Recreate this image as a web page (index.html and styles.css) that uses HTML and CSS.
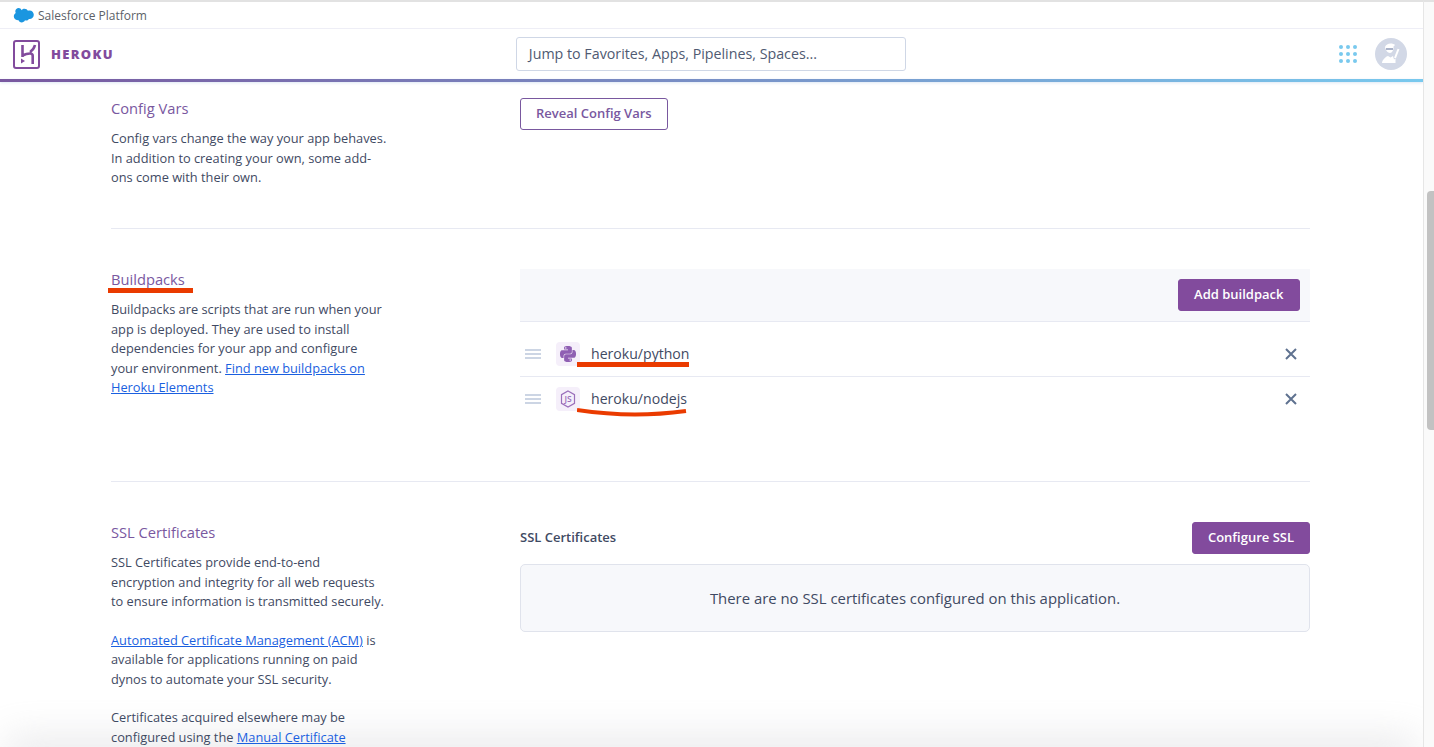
FILE: index.html
```html
<!DOCTYPE html>
<html>
<head>
  <title>Settings | Heroku</title>
  <link rel="stylesheet" href="styles.css">
</head>
<body>
<div id="page">
  <div id="window">
    <div id="sfBar">
      <svg class="cloud" width="21" height="15" viewBox="0 0 21 15">
        <path fill="#1b96e0" d="M8.7 2.2C9.4 1.3 10.4.8 11.500.8c1.500 0 2.800.8 3.400 2 .6-.2 1.100-.4 1.700-.4 2.400 0 4.200 2 4.200 4.300s-1.900 4.300-4.200 4.300h-.8c-.5 1-1.500 1.600-2.600 1.600-.4 0-.9-.1-1.200-.3-.6 1.300-1.900 2.100-3.300 2.100-1.500 0-2.800-.9-3.400-2.300-.3.1-.5.1-.8.1C2.500 12.200.8 10.500.8 8.300c0-1.400.7-2.700 1.900-3.400-.2-.5-.4-1-.4-1.600C2.300 1.500 3.900 0 5.700 0c1.200 0 2.300.8 3 2.200z"/>
      </svg>
      <span>Salesforce Platform</span>
    </div>
    <div id="nav">
      <div class="brand">
        <svg width="27" height="29" viewBox="0 0 27 29">
          <rect x="1" y="1" width="25" height="27" rx="2" fill="none" stroke="#824b9d" stroke-width="2"/>
          <path fill="none" stroke="#824b9d" stroke-width="2.600" d="M9.500 5v12M9.500 15.500c3-1.500 5-2 7.500-2 1.700 0 2.700 1 2.700 2.300V24M22 5c-.8 3-2.500 5.500-5 7"/>
          <path fill="#824b9d" d="M8 18.500l4 2.500-4 2.500z"/>
        </svg>
        <span>HEROKU</span>
      </div>
      <div class="search">Jump to Favorites, Apps, Pipelines, Spaces...</div>
      <div class="navRight">
        <svg width="18" height="18" viewBox="0 0 18 18" fill="#79c9ee">
          <circle cx="2" cy="2" r="2"/><circle cx="9" cy="2" r="2"/><circle cx="16" cy="2" r="2"/>
          <circle cx="2" cy="9" r="2"/><circle cx="9" cy="9" r="2"/><circle cx="16" cy="9" r="2"/>
          <circle cx="2" cy="16" r="2"/><circle cx="9" cy="16" r="2"/><circle cx="16" cy="16" r="2"/>
        </svg>
        <svg width="32" height="32" viewBox="0 0 32 32">
          <circle cx="16" cy="16" r="16" fill="#d2d8e6"/>
          <path fill="#fff" d="M10 9c.8-2.300 3-3.500 5.500-3.500 2 0 3.500.5 4.500 1.500l-1.500 1.500c.3 3.500-1.300 6.500-3.500 6.500s-4.500-2.800-5-6z"/>
          <path fill="#fff" d="M7 25c0-1 .5-2.500 1.500-3.500 1-1.500 2.500-3 4.500-3.500l2.500 1.500L18 18l1 3.500 1.500-1V25z"/>
          <path fill="none" stroke="#fff" stroke-width="2" d="M20 20l3.500-9"/>
          <rect x="11" y="10" width="7" height="2" fill="#aab3c9"/>
        </svg>
      </div>
    </div>
    <div id="rainbow"></div>

    <div id="content">
      <section class="row first">
        <div class="info">
          <h3>Config Vars</h3>
          <p>Config vars change the way your app behaves.<br>In addition to creating your own, some add-<br>ons come with their own.</p>
        </div>
        <div class="main">
          <a class="btn outline">Reveal Config Vars</a>
        </div>
      </section>

      <section class="row">
        <div class="info">
          <h3><span class="marked">Buildpacks<i class="mark underTitle"></i></span></h3>
          <p>Buildpacks are scripts that are run when your<br>app is deployed. They are used to install<br>dependencies for your app and configure<br>your environment. <a href="#">Find new buildpacks on<br>Heroku Elements</a></p>
        </div>
        <div class="main">
          <div class="panelHead"><a class="btn solid">Add buildpack</a></div>
          <ul class="packs">
            <li>
              <span class="grip"></span>
              <span class="langIcon">
                <svg width="16" height="16" viewBox="0 0 24 24">
                  <path fill="#8f5fb3" d="M14.25.18l.9.2.73.26.59.3.45.32.34.34.25.34.16.33.1.3.04.26.02.2-.01.13V8.5l-.05.63-.13.55-.21.46-.26.38-.3.31-.33.25-.35.19-.35.14-.33.1-.3.07-.26.04-.21.02H8.77l-.69.05-.59.14-.5.22-.41.27-.33.32-.27.35-.2.36-.15.37-.1.35-.07.32-.04.27-.02.21v3.06H3.17l-.21-.03-.28-.07-.32-.12-.35-.18-.36-.26-.36-.36-.35-.46-.32-.59-.28-.73-.21-.88-.14-1.05-.05-1.23.06-1.22.16-1.04.24-.87.32-.71.36-.57.4-.44.42-.33.42-.24.4-.16.36-.1.32-.05.24-.01h.16l.06.01h8.16v-.83H6.18l-.01-2.75-.02-.37.05-.34.11-.31.17-.28.25-.26.31-.23.38-.2.44-.18.51-.15.58-.12.64-.1.71-.06.77-.04.84-.02 1.27.05zm-6.3 1.98l-.23.33-.08.41.08.41.23.34.33.22.41.09.41-.09.33-.22.23-.34.08-.41-.08-.41-.23-.33-.33-.22-.41-.09-.41.09zm13.09 3.95l.28.06.32.12.35.18.36.27.36.35.35.47.32.59.28.73.21.88.14 1.04.05 1.23-.06 1.23-.16 1.04-.24.86-.32.71-.36.57-.4.45-.42.33-.42.24-.4.16-.36.09-.32.05-.24.02-.16-.01h-8.22v.82h5.84l.01 2.76.02.36-.05.34-.11.31-.17.29-.25.25-.31.24-.38.2-.44.17-.51.15-.58.13-.64.09-.71.07-.77.04-.84.01-1.27-.04-1.07-.14-.9-.2-.73-.25-.59-.3-.45-.33-.34-.34-.25-.34-.16-.33-.1-.3-.04-.25-.02-.2.01-.13v-5.34l.05-.64.13-.54.21-.46.26-.38.3-.32.33-.24.35-.2.35-.14.33-.1.3-.06.26-.04.21-.02.13-.01h5.84l.69-.05.59-.14.5-.21.41-.28.33-.32.27-.35.2-.36.15-.36.1-.35.07-.32.04-.28.02-.21V6.07h2.09l.14.01zm-6.47 14.25l-.23.33-.08.41.08.41.23.33.33.23.41.08.41-.08.33-.23.23-.33.08-.41-.08-.41-.23-.33-.33-.23-.41-.08-.41.08z"/>
                </svg>
              </span>
              <span class="marked packName">heroku/python<i class="mark underPython"></i></span>
              <svg class="close" width="12" height="12" viewBox="0 0 12 12"><path stroke="#5f7290" stroke-width="2" d="M1 1l10 10M11 1L1 11"/></svg>
            </li>
            <li>
              <span class="grip"></span>
              <span class="langIcon">
                <svg width="16" height="18" viewBox="0 0 16 18">
                  <path fill="none" stroke="#9a6fbb" stroke-width="1.200" d="M8 1l6.500 3.700v8.600L8 17l-6.500-3.700V4.700z"/>
                  <text x="8" y="12" text-anchor="middle" class="jsText">JS</text>
                </svg>
              </span>
              <span class="marked packName">heroku/nodejs<svg class="underNode" width="110" height="10" viewBox="0 0 110 10"><path fill="none" stroke="#ea3b00" stroke-width="4" d="M0 3c20 3 40 4.500 58 4.500 18 0 36-1.500 51-3.500"/></svg></span>
              <svg class="close" width="12" height="12" viewBox="0 0 12 12"><path stroke="#5f7290" stroke-width="2" d="M1 1l10 10M11 1L1 11"/></svg>
            </li>
          </ul>
        </div>
      </section>

      <section class="row">
        <div class="info">
          <h3>SSL Certificates</h3>
          <p>SSL Certificates provide end-to-end<br>encryption and integrity for all web requests<br>to ensure information is transmitted securely.</p>
          <p><a href="#">Automated Certificate Management (ACM)</a> is<br>available for applications running on paid<br>dynos to automate your SSL security.</p>
          <p>Certificates acquired elsewhere may be<br>configured using the <a href="#">Manual Certificate</a></p>
        </div>
        <div class="main">
          <div class="sslHead">
            <b>SSL Certificates</b>
            <a class="btn solid">Configure SSL</a>
          </div>
          <div class="empty">There are no SSL certificates configured on this application.</div>
        </div>
      </section>
      <div id="fade"></div>
    </div>
  </div>
  <div id="scrollbar"><div class="thumb"></div></div>
</div>
</body>
</html>
```

FILE: styles.css
```css
html, body {
  margin: 0;
  padding: 0;
  height: 100%;
  overflow: hidden;
}

body {
  font-family: "Open Sans", "Noto Sans", sans-serif;
  color: #3f4a63;
  background: #fff;
  font-size: 13px;
}

#page {
  display: flex;
  height: 747px;
}

#window {
  flex: 1;
  min-width: 0;
  display: flex;
  flex-direction: column;
  border-top: 2px solid #e2e2e2;
}

#sfBar {
  height: 26px;
  flex: none;
  display: flex;
  align-items: center;
  gap: 4px;
  padding-left: 13px;
  font-size: 12px;
  color: #5c5f68;
  border-bottom: 1px solid #eeeef6;
}

#nav {
  height: 50px;
  flex: none;
  display: flex;
  align-items: center;
  padding: 0 16px 0 13px;
}

.brand {
  display: flex;
  align-items: center;
  gap: 11px;
  color: #824b9d;
  font-weight: 800;
  font-size: 13px;
  letter-spacing: 1.300px;
}

.search {
  width: 376px;
  height: 32px;
  line-height: 32px;
  margin-left: 402px;
  padding-left: 12px;
  border: 1px solid #cfd7e6;
  border-radius: 3px;
  font-size: 14.250px;
  color: #4f5a72;
}

.navRight {
  margin-left: auto;
  display: flex;
  align-items: center;
  gap: 18px;
}

#rainbow {
  height: 3px;
  flex: none;
  background: linear-gradient(to right, #79589f, #79c9ee);
  box-shadow: 0 1px 3px rgba(120, 160, 210, 0.25);
}

#content {
  flex: 1;
  min-height: 0;
  overflow: hidden;
  position: relative;
  padding: 0 113px 0 111px;
}

.row {
  display: flex;
  padding: 40px 0 60px;
  border-top: 1px solid #e7e9f2;
  position: relative;
  z-index: 1;
}

.row.first {
  border-top: 0;
  padding: 16px 0 39px;
  height: 91px;
}

.info {
  width: 409px;
  flex: none;
}

.info h3 {
  margin: 0 0 11px;
  font-size: 14.700px;
  line-height: 20px;
  font-weight: 400;
  color: #79589f;
}

.info p {
  margin: 0 0 19px;
  line-height: 19.500px;
  font-size: 12.800px;
}

.info a {
  color: #1a5fe0;
  text-decoration: underline;
}

.main {
  flex: 1;
  min-width: 0;
}

.btn {
  display: inline-block;
  box-sizing: border-box;
  height: 32px;
  line-height: 28px;
  padding: 0 15px;
  border-radius: 3px;
  font-size: 13px;
  font-weight: 600;
  border: 1px solid #79589f;
}

.btn.outline {
  color: #79589f;
  background: #fff;
}

.btn.solid {
  color: #fff;
  background: #824b9d;
  border-color: #824b9d;
}

.panelHead {
  display: flex;
  justify-content: flex-end;
  padding: 10px;
  background: #f7f8fb;
  border-bottom: 1px solid #e7e9f2;
}

.panelHead .btn {
  padding: 0 15.500px;
}

.packs {
  list-style: none;
  margin: 0;
  padding: 0;
}

.packs li {
  display: flex;
  align-items: center;
  height: 24px;
  padding: 10px 13px 10px 5px;
}

.packs li:first-child {
  padding-top: 20px;
  border-bottom: 1px solid #e7e9f2;
}

.grip {
  width: 16px;
  height: 10px;
  margin-right: 15px;
  background: linear-gradient(#ccd5e4 2px, transparent 2px, transparent 4px, #ccd5e4 4px, #ccd5e4 6px, transparent 6px, transparent 8px, #ccd5e4 8px);
}

.langIcon {
  width: 24px;
  height: 24px;
  margin-right: 11px;
  border-radius: 4px;
  background: #f5effa;
  display: flex;
  align-items: center;
  justify-content: center;
}

.jsText {
  font-size: 8.500px;
  font-weight: 600;
  fill: #9a6fbb;
}

.packName {
  font-size: 14.100px;
  color: #3f4a63;
  padding-bottom: 2px;
}

.close {
  margin-left: auto;
}

.marked {
  position: relative;
  display: inline-block;
}

.mark {
  position: absolute;
  display: block;
  background: #ea3b00;
  height: 5px;
}

.underTitle {
  left: -3px;
  right: -8px;
  bottom: -4px;
}

.underPython {
  left: -14px;
  right: 0;
  bottom: -2px;
}

.underNode {
  position: absolute;
  left: -14px;
  bottom: -7px;
}

.sslHead {
  display: flex;
  justify-content: space-between;
  align-items: center;
  margin-bottom: 10px;
}

.sslHead b {
  font-size: 13px;
  font-weight: 600;
  padding-bottom: 3px;
}

.empty {
  height: 66px;
  line-height: 66px;
  text-align: center;
  font-size: 14.900px;
  background: #f7f8fb;
  border: 1px solid #e0e3ec;
  border-radius: 5px;
}

#fade {
  position: absolute;
  left: 12px;
  right: 12px;
  bottom: -14px;
  height: 14px;
  background: #e4e4e6;
  box-shadow: 0 0 40px 6px rgba(190, 190, 195, 0.45);
}

#scrollbar {
  width: 7px;
  flex: none;
  background: #fafafa;
  border-left: 1px solid #e6e6e6;
  border-top: 2px solid #e2e2e2;
  padding: 189px 0 0 3px;
}

.thumb {
  width: 7px;
  height: 239px;
  background: #c2c2c2;
  border-radius: 4px 0 0 4px;
}
```
